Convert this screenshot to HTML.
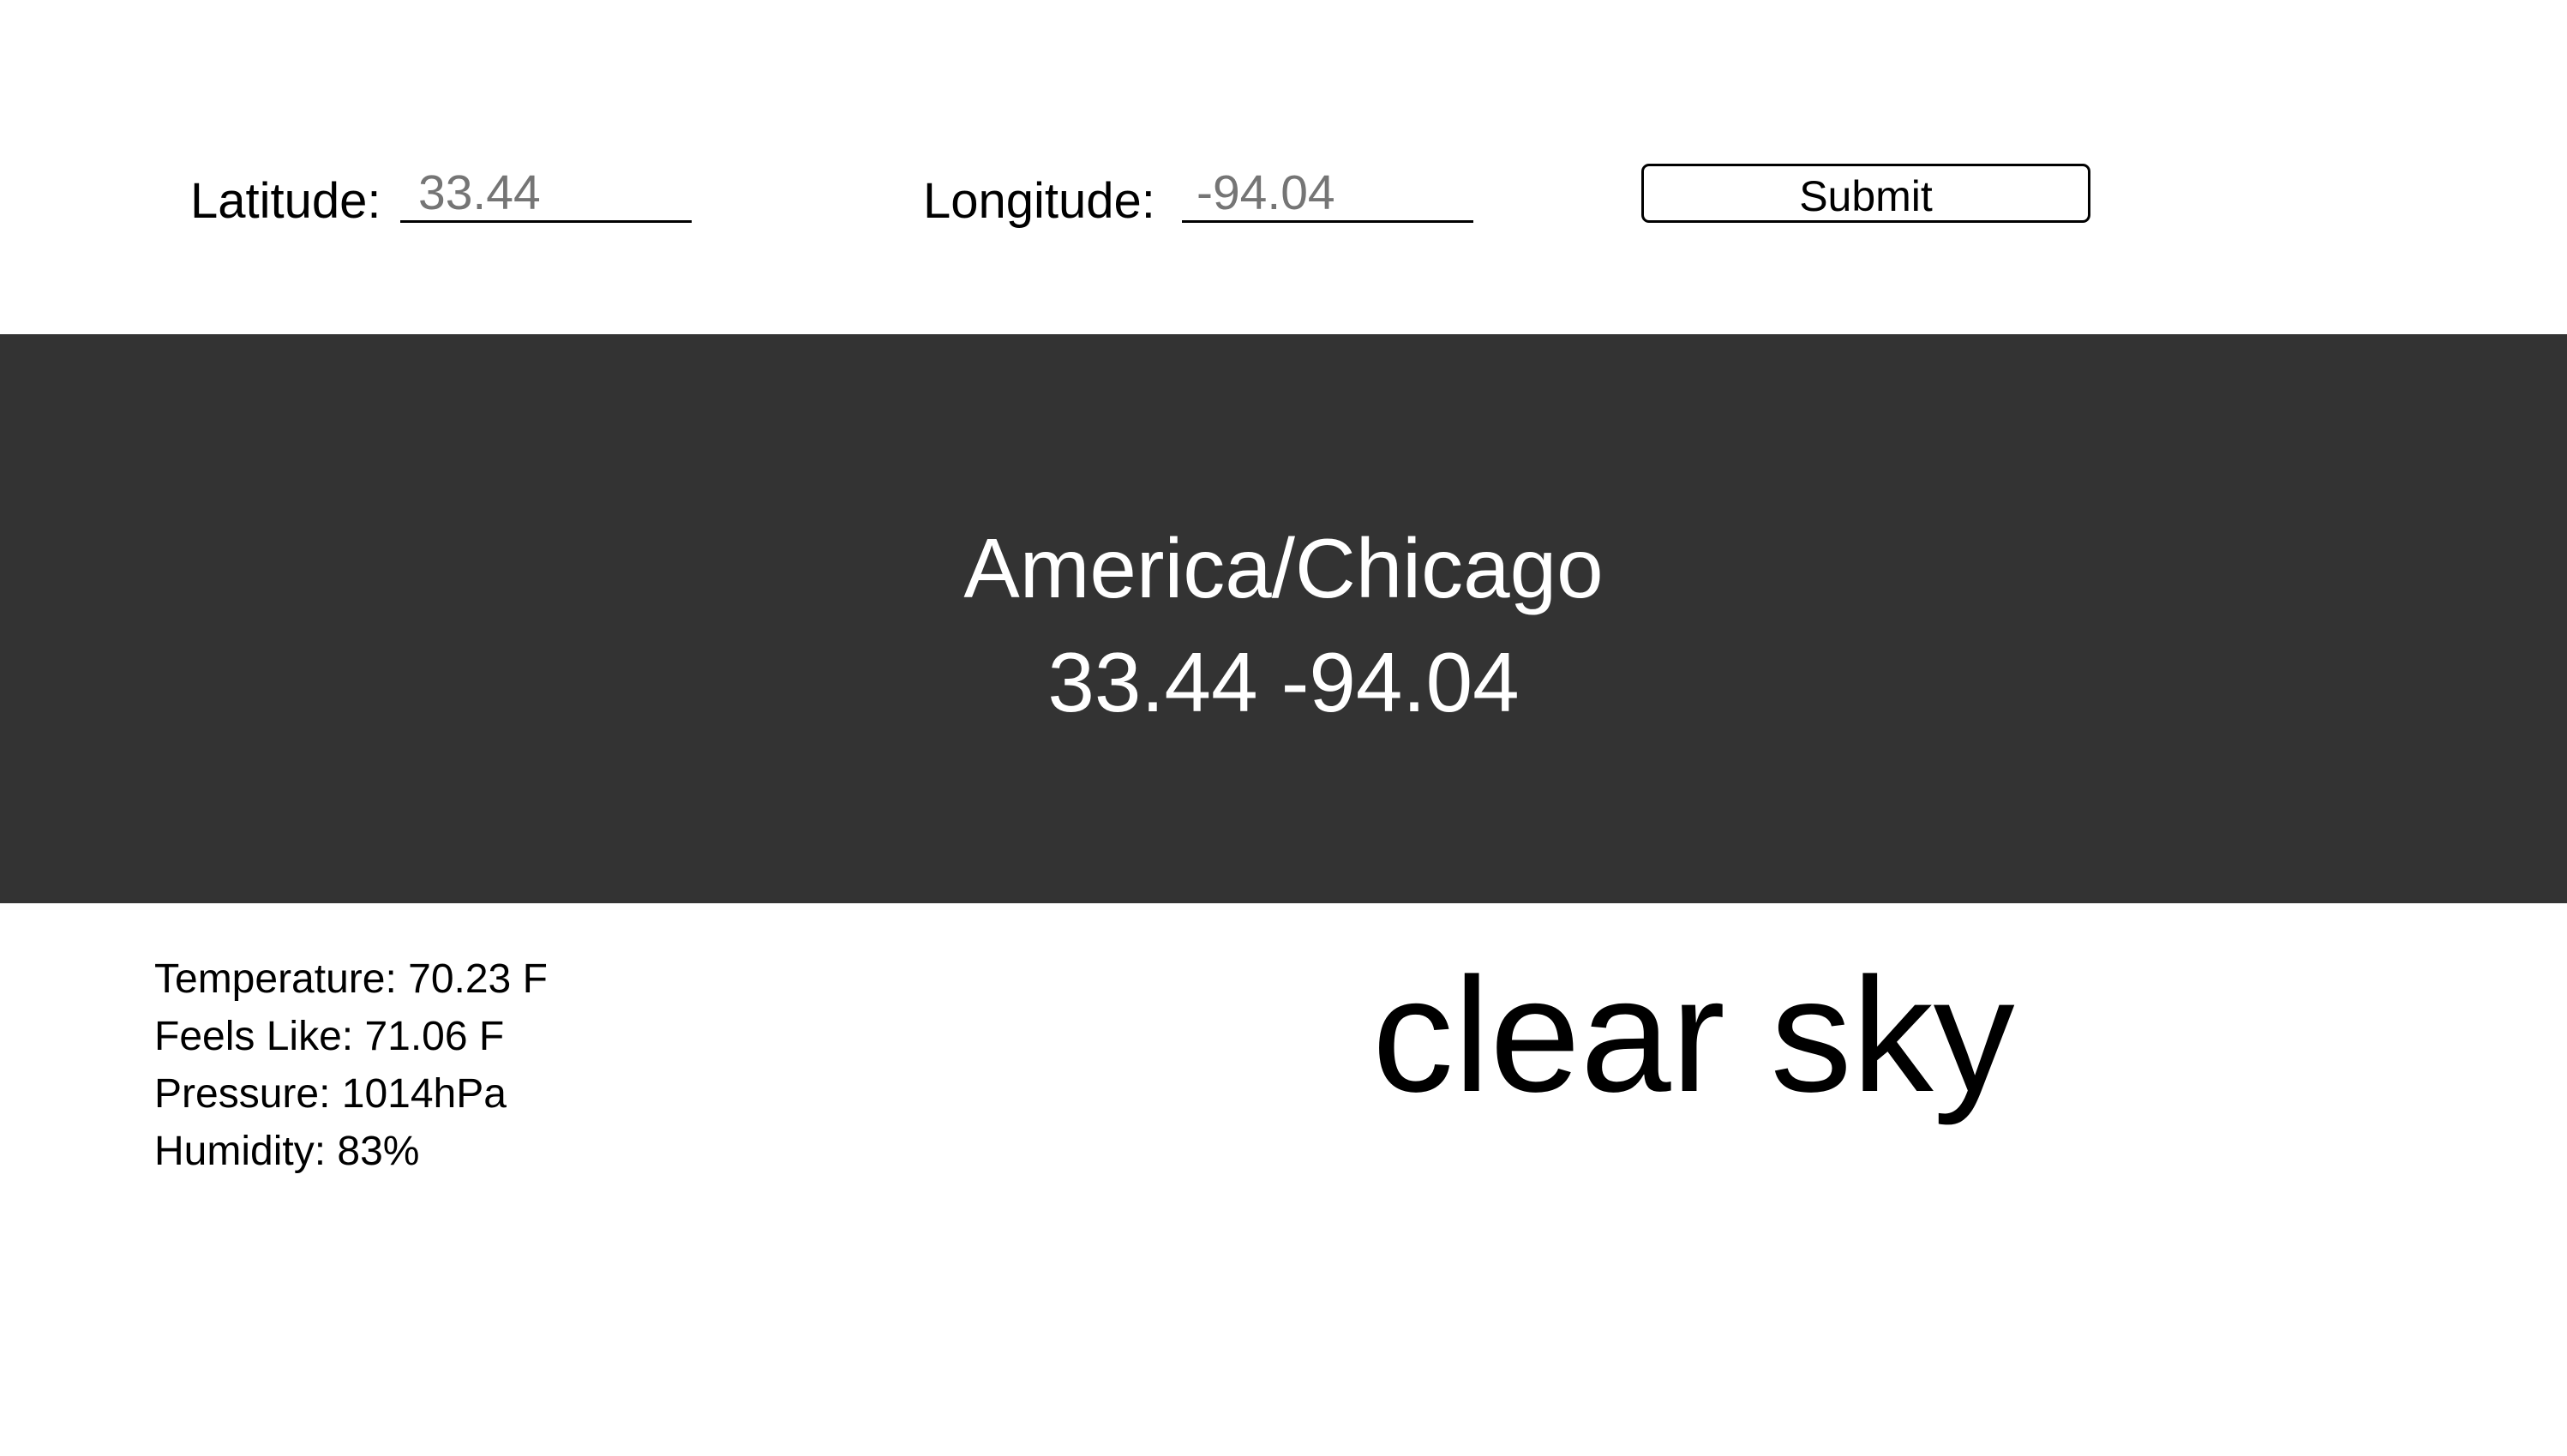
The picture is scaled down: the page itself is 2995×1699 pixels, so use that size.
<!DOCTYPE html>
<html><head><meta charset="utf-8"><style>
html,body{margin:0;padding:0;width:2995px;height:1699px;background:#fff;overflow:hidden;font-family:"Liberation Sans",sans-serif;}
.a{position:absolute;white-space:nowrap;line-height:1;}
</style></head><body>
<div class="a" style="left:222px;top:206px;font-size:58px;color:#000;">Latitude:</div>
<div class="a" style="left:488px;top:197px;font-size:57px;color:#757575;">33.44</div>
<div class="a" style="left:467px;top:257px;width:340px;height:3px;background:#000;"></div>
<div class="a" style="left:1077px;top:206px;font-size:58px;color:#000;">Longitude:</div>
<div class="a" style="left:1396px;top:197px;font-size:57px;color:#757575;">-94.04</div>
<div class="a" style="left:1379px;top:257px;width:340px;height:3px;background:#000;"></div>
<div class="a" style="left:1915px;top:191px;width:518px;height:63px;border:3px solid #000;border-radius:9px;"></div>
<div class="a" style="left:1915px;top:204px;width:524px;text-align:center;font-size:50px;color:#000;">Submit</div>
<div class="a" style="left:0;top:390px;width:2995px;height:664px;background:#333;"></div>
<div class="a" style="left:0;top:614px;width:2995px;text-align:center;font-size:98px;color:#fff;">America/Chicago</div>
<div class="a" style="left:0;top:747px;width:2995px;text-align:center;font-size:98px;color:#fff;">33.44 -94.04</div>
<div class="a" style="left:180px;top:1119px;font-size:48px;color:#000;">Temperature: 70.23 F</div>
<div class="a" style="left:180px;top:1186px;font-size:48px;color:#000;">Feels Like: 71.06 F</div>
<div class="a" style="left:180px;top:1253px;font-size:48px;color:#000;">Pressure: 1014hPa</div>
<div class="a" style="left:180px;top:1320px;font-size:48px;color:#000;">Humidity: 83%</div>
<div class="a" style="left:1601px;top:1113px;font-size:190px;color:#000;">clear sky</div>
</body></html>
